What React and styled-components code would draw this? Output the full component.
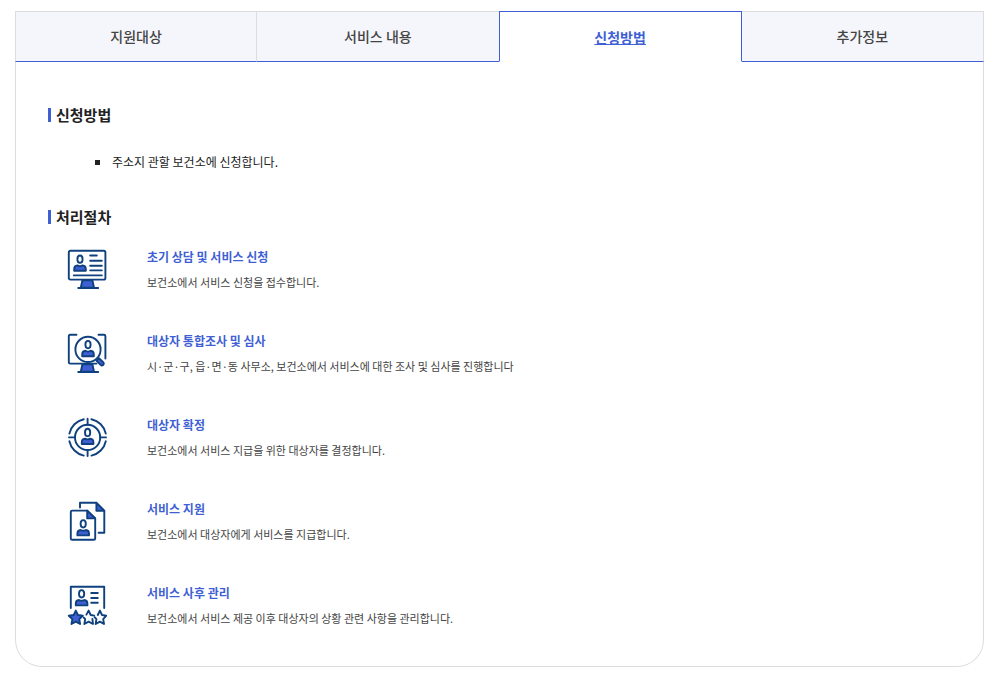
import React, { useState } from 'react';
import styled, { createGlobalStyle } from 'styled-components';

const NAVY = '#0f417f';
const BLUE = '#3f5fd4';

const tabs = ['지원대상', '서비스 내용', '신청방법', '추가정보'];

// Head and shoulders, shared by every step icon
const Person = ({ x, y }) => (
  <g transform={`translate(${x} ${y})`}>
    <ellipse cx="0" cy="0" rx="2.6" ry="3.7" fill="#fff" />
    <path
      d="M-5.8 11.6V9.8C-5.8 7.4-4.6 6.4-2.6 6.2Q0 7.8 2.6 6.2C4.6 6.4 5.8 7.4 5.8 9.8V11.6Z"
      fill={BLUE}
    />
  </g>
);

const Stand = () => (
  <>
    <path d="M15.4 31.2H25.4L27 38.8H13.8Z" fill={BLUE} />
    <path d="M11.2 39H31.2" />
  </>
);

const ConsultIcon = () => (
  <StepIcon viewBox="0 0 40 40" aria-hidden="true">
    <rect x="1.8" y="1.8" width="36.6" height="28.8" rx="1.6" />
    <Person x={13} y={10.2} />
    <path d="M23.2 6.5H29.8M23.2 11.8H34.8M23.2 16.7H34.8M23.2 21.4H34.8M6.8 26.4H34.8" />
    <Stand />
  </StepIcon>
);

const ReviewIcon = () => (
  <StepIcon viewBox="0 0 40 40" aria-hidden="true">
    <path d="M9.5 1.8H3.2Q1.8 1.8 1.8 3.2V29.2Q1.8 30.6 3.2 30.6H29.5" />
    <path d="M31.5 1.8H37Q38.4 1.8 38.4 3.2V25.5" />
    <Stand />
    <circle cx="21" cy="16.4" r="12.6" fill="#fff" />
    <Person x={21} y={11.6} />
    <path d="M29.4 27.6L32 25.2L36.4 29.4Q37.4 30.8 36.2 32Q34.8 33.1 33.6 31.8Z" fill={BLUE} />
  </StepIcon>
);

const TargetIcon = () => (
  <StepIcon viewBox="0 0 40 40" aria-hidden="true">
    <circle cx="20.6" cy="20.4" r="12.6" />
    <path d="M24.4 2.2A18.6 18.6 0 0 1 38.8 16.6M38.8 24.2A18.6 18.6 0 0 1 24.4 38.6M16.8 38.6A18.6 18.6 0 0 1 2.4 24.2M2.4 16.6A18.6 18.6 0 0 1 16.8 2.2" />
    <path d="M20.6 1.8V7.8M20.6 33V39M2 20.4H8M33.2 20.4H39" />
    <Person x={20.6} y={15.4} />
  </StepIcon>
);

const DocumentIcon = () => (
  <StepIcon viewBox="0 0 40 40" aria-hidden="true">
    <path d="M13 6.6V1.8H29.4L37.3 9.8V31.8H31.6" />
    <path d="M29.4 1.8V9.8H37.3Z" fill={BLUE} />
    <path d="M20.2 9.6H5.2Q3.8 9.6 3.8 11V37.4Q3.8 38.8 5.2 38.8H26.8Q28.2 38.8 28.2 37.4V17.4Z" />
    <path d="M20.2 9.6V17.4H28.2Z" fill={BLUE} />
    <Person x={16.2} y={22.8} />
  </StepIcon>
);

const star = 'M0-6.8L2.1-2.4L7-1.7L3.5 1.7L4.3 6.6L0 4.3L-4.3 6.6L-3.5 1.7L-7-1.7L-2.1-2.4Z';

const FollowUpIcon = () => (
  <StepIcon viewBox="0 0 40 40" aria-hidden="true">
    <path d="M3.8 23V1.8H37.2V23" />
    <Person x={14.6} y={8.8} />
    <path d="M24.2 8H30.8M24.2 13H30.8M24.2 17.8H30.8" />
    <path d={star} transform="translate(8.8 32.4)" fill={BLUE} />
    <path d="M19.4 29.6L21.6 25.6L23.7 30L27.2 30.6M25.4 34L26 39L21.6 36.7L17.4 39L18.2 34.2L16.8 32.6" />
    <path d="M30.8 30L32.9 25.6L35 30L39.3 30.7L36.2 34.1L37 39L32.9 36.7L28.7 39L29.4 34.1L27.6 32.2" />
  </StepIcon>
);

const steps = [
  { title: '초기 상담 및 서비스 신청', text: '보건소에서 서비스 신청을 접수합니다.', Icon: ConsultIcon },
  {
    title: '대상자 통합조사 및 심사',
    text: '시·군·구, 읍·면·동 사무소, 보건소에서 서비스에 대한 조사 및 심사를 진행합니다',
    Icon: ReviewIcon,
  },
  { title: '대상자 확정', text: '보건소에서 서비스 지급을 위한 대상자를 결정합니다.', Icon: TargetIcon },
  { title: '서비스 지원', text: '보건소에서 대상자에게 서비스를 지급합니다.', Icon: DocumentIcon },
  {
    title: '서비스 사후 관리',
    text: '보건소에서 서비스 제공 이후 대상자의 상황 관련 사항을 관리합니다.',
    Icon: FollowUpIcon,
  },
];

const App = () => {
  const [active, setActive] = useState(2);

  return (
    <Page>
      <GlobalStyle />
      <TabList role="tablist">
        {tabs.map((label, i) => (
          <Tab
            key={label}
            type="button"
            role="tab"
            id={`tab-${i}`}
            aria-selected={i === active}
            aria-controls="tab-panel"
            $active={i === active}
            onClick={() => setActive(i)}
          >
            {label}
          </Tab>
        ))}
      </TabList>
      <Panel role="tabpanel" id="tab-panel" aria-labelledby={`tab-${active}`}>
        <SectionTitle>신청방법</SectionTitle>
        <MethodList>
          <MethodItem>주소지 관할 보건소에 신청합니다.</MethodItem>
        </MethodList>
        <SectionTitle>처리절차</SectionTitle>
        <StepList>
          {steps.map(({ title, text, Icon }) => (
            <Step key={title}>
              <Icon />
              <div>
                <StepTitle>{title}</StepTitle>
                <StepText>{text}</StepText>
              </div>
            </Step>
          ))}
        </StepList>
      </Panel>
    </Page>
  );
};

// Styled components
const GlobalStyle = createGlobalStyle`
  * {
    box-sizing: border-box;
  }

  body {
    margin: 0;
    background: #fff;
    color: #222;
    font-family: 'Noto Sans CJK KR', sans-serif;
  }
`;

const Page = styled.main`
  padding: 11px 12px 14px 15px;
`;

const TabList = styled.div`
  display: grid;
  grid-template-columns: repeat(4, 1fr);
`;

const Tab = styled.button`
  height: 51px;
  margin-left: ${props => (props.$active ? '-1px' : '0')};
  padding: ${props => (props.$active ? '0' : '0 0 2px')};
  border: 1px solid ${props => (props.$active ? BLUE : '#ddd')};
  border-left-width: ${props => (props.$active ? '1px' : '0')};
  border-bottom-color: ${props => (props.$active ? '#fff' : BLUE)};
  background: ${props => (props.$active ? '#fff' : '#f5f6fb')};
  color: ${props => (props.$active ? BLUE : '#444')};
  font-family: inherit;
  font-size: 14px;
  font-weight: ${props => (props.$active ? 700 : 500)};
  text-decoration: ${props => (props.$active ? 'underline' : 'none')};
  cursor: pointer;

  &:first-child {
    margin-left: 0;
    border-left-width: 1px;
  }
`;

const Panel = styled.section`
  padding: 41px 32px 38px;
  border: 1px solid #ddd;
  border-top: 0;
  border-radius: 0 0 27px 27px;
`;

const SectionTitle = styled.h2`
  display: flex;
  align-items: center;
  gap: 5px;
  margin: 0;
  font-size: 15px;
  font-weight: 700;
  line-height: 24px;

  &::before {
    content: '';
    width: 3px;
    height: 14px;
    background: ${BLUE};
  }
`;

const MethodList = styled.ul`
  margin: 25px 0 33px;
  padding: 0 0 0 47px;
  list-style: none;
`;

const MethodItem = styled.li`
  display: flex;
  align-items: center;
  gap: 12px;
  font-size: 12px;
  line-height: 20px;

  &::before {
    content: '';
    width: 5px;
    height: 5px;
    background: #222;
  }
`;

const StepList = styled.ol`
  display: flex;
  flex-direction: column;
  gap: 39px;
  margin: 18px 0 0;
  padding: 0 0 0 19px;
  list-style: none;
`;

const Step = styled.li`
  display: flex;
  align-items: flex-start;
  gap: 40px;
`;

const StepIcon = styled.svg`
  flex: none;
  width: 40px;
  height: 40px;
  margin-top: 2px;
  fill: none;
  stroke: ${NAVY};
  stroke-width: 1.9;
  stroke-linecap: round;
  stroke-linejoin: round;
`;

const StepTitle = styled.h3`
  margin: 0 0 5px;
  color: ${BLUE};
  font-size: 12px;
  font-weight: 700;
  line-height: 20px;
`;

const StepText = styled.p`
  margin: 0;
  color: #444;
  font-size: 11px;
  line-height: 20px;
`;

export default App;
